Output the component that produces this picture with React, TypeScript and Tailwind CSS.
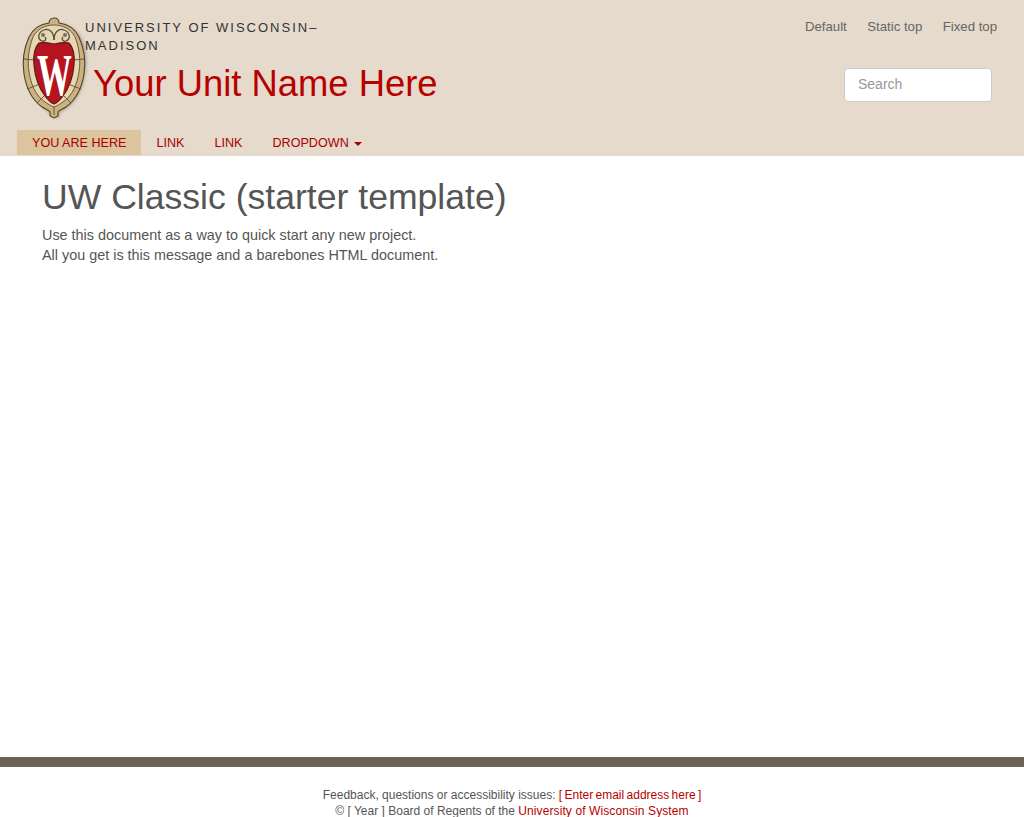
const sans = "font-['Liberation_Sans',Arial,sans-serif]";

function Crest() {
  return (
    <svg width="70" height="106" viewBox="0 0 70 106" className="shrink-0">
      <defs>
        <filter id="crest-shadow" x="-20%" y="-20%" width="140%" height="140%">
          <feGaussianBlur stdDeviation="1.6" />
        </filter>
      </defs>
      {/* soft shadow */}
      <path
        d="M36 8c14 1 24 8 28 20 4 13 3 30-1 42-4 13-12 22-22 27l-3 7c-10-5-22-17-27-32-5-15-4-35 2-47C17 14 26 8 36 8z"
        fill="#6b6050"
        opacity="0.4"
        filter="url(#crest-shadow)"
      />
      {/* outer frame */}
      <path
        d="M34 3c3 0 5 2 5 5 9 1 16 6 20 14 5 11 7 24 5 37-2 13-7 25-18 33-3 2-7 3-8 5v4l-4 2-4-2v-4c-1-2-5-3-8-5C11 84 6 72 4 59 2 46 4 33 9 22 13 14 20 9 29 8c0-3 2-5 5-5z"
        fill="#cdb27e"
        stroke="#4c4233"
        strokeWidth="1.1"
      />
      {/* inner light band */}
      <path
        d="M34 10c9 0 17 4 21 12 4 10 6 23 4 35-2 12-6 23-16 30-3 2-6 4-9 5-3-1-6-3-9-5C15 80 11 69 9 57 7 45 9 32 13 22c4-8 12-12 21-12z"
        fill="#e6d6b2"
        stroke="#5a4e3b"
        strokeWidth="0.9"
      />
      {/* scrolls at the top */}
      <path d="M34 25c0-8-5-12-10-10-6 2-7 9-2 11 3 1 5-2 3-4" fill="none" stroke="#5a4e3b" strokeWidth="1.3" />
      <path d="M34 25c0-8 5-12 10-10 6 2 7 9 2 11-3 1-5-2-3-4" fill="none" stroke="#5a4e3b" strokeWidth="1.3" />
      <circle cx="23" cy="20" r="2" fill="#7a705e" />
      <circle cx="45" cy="20" r="2" fill="#7a705e" />
      {/* frame bars */}
      <path d="M4 44l11 1M64 44l-11 1M7 74l13-5M61 74l-13-5M34 92v8M17 88l7-7M51 88l-7-7" stroke="#5a4e3b" strokeWidth="0.9" />
      {/* shield */}
      <path
        d="M34 29c5-1 11-2 15-1 4 4 6 12 5 22-1 12-5 23-11 31-3 4-6 7-9 8-3-1-6-4-9-8-6-8-10-19-11-31-1-10 1-18 5-22 4-1 10 0 15 1z"
        fill="#b5141e"
        stroke="#5c1a16"
        strokeWidth="1.2"
      />
      <text
        transform="translate(34.5 80) scale(0.58 1)"
        textAnchor="middle"
        fill="#ffffff"
        fontFamily="'Liberation Serif', serif"
        fontWeight="700"
        fontSize="60"
      >
        W
      </text>
    </svg>
  );
}

export default function App() {
  return (
    <div className={`${sans} flex h-[817px] flex-col overflow-hidden bg-white text-sm text-[#555]`}>
      {/* Header */}
      <header className="flex h-[156px] flex-col bg-[#e5dacb]">
        <div className="flex h-[130px] justify-between">
          <div className="flex pt-[15px] pl-[20px]">
            <Crest />
            <div className="-ml-[5px] pt-[4px]">
              <div className="w-[250px] text-[13px] leading-[18px] tracking-[2px] text-[#333]">
                UNIVERSITY OF WISCONSIN–MADISON
              </div>
              <div className="mt-[3px] ml-[8px] text-[36.4px] leading-[52px] text-[#b70101]">Your Unit Name Here</div>
            </div>
          </div>

          <div className="flex flex-col items-end pt-[19px] pr-[27px]">
            <nav className="flex gap-[20.5px] text-[13.2px] leading-4 text-[#666]">
              <a href="#">Default</a>
              <a href="#">Static top</a>
              <a href="#">Fixed top</a>
            </nav>
            <input
              placeholder="Search"
              className="mt-[33px] mr-[5px] h-[34px] w-[148px] rounded border border-[#ccc] bg-white px-[13px] pb-[2px] text-sm text-[#555] placeholder:text-[#999]"
            />
          </div>
        </div>

        <nav className="flex h-[25px] pl-[17px] text-[12.6px] leading-[27px] text-[#a90000]">
          <a href="#" className="bg-[#dbc49e] px-[15px]">YOU ARE HERE</a>
          <a href="#" className="px-[15px]">LINK</a>
          <a href="#" className="px-[15px]">LINK</a>
          <a href="#" className="px-[15px]">
            DROPDOWN
            <span className="ml-[5px] inline-block border-x-[4px] border-t-[4px] border-x-transparent border-t-[#a90000] align-middle" />
          </a>
        </nav>
      </header>

      {/* Main */}
      <main className="flex-1 px-[42px] pt-[20px]">
        <h1 className="text-[35.6px] leading-[42px] text-[#555]">UW Classic (starter template)</h1>
        <p className="mt-[7px] text-[14.4px] leading-5">
          Use this document as a way to quick start any new project.
          <br />
          All you get is this message and a barebones HTML document.
        </p>
      </main>

      {/* Footer */}
      <footer className="h-[60px] shrink-0">
        <div className="h-[10px] bg-[#6b6455]" />
        <div className="pt-[20px] text-center text-xs leading-4 text-[#555]">
          <p>
            Feedback, questions or accessibility issues: <a href="#" className="text-[#b70101] [word-spacing:-1px]">[ Enter email address here ]</a>
          </p>
          <p>
            © [ Year ] Board of Regents of the <a href="#" className="text-[#b70101] tracking-[0.1px]">University of Wisconsin System</a>
          </p>
        </div>
      </footer>
    </div>
  );
}
